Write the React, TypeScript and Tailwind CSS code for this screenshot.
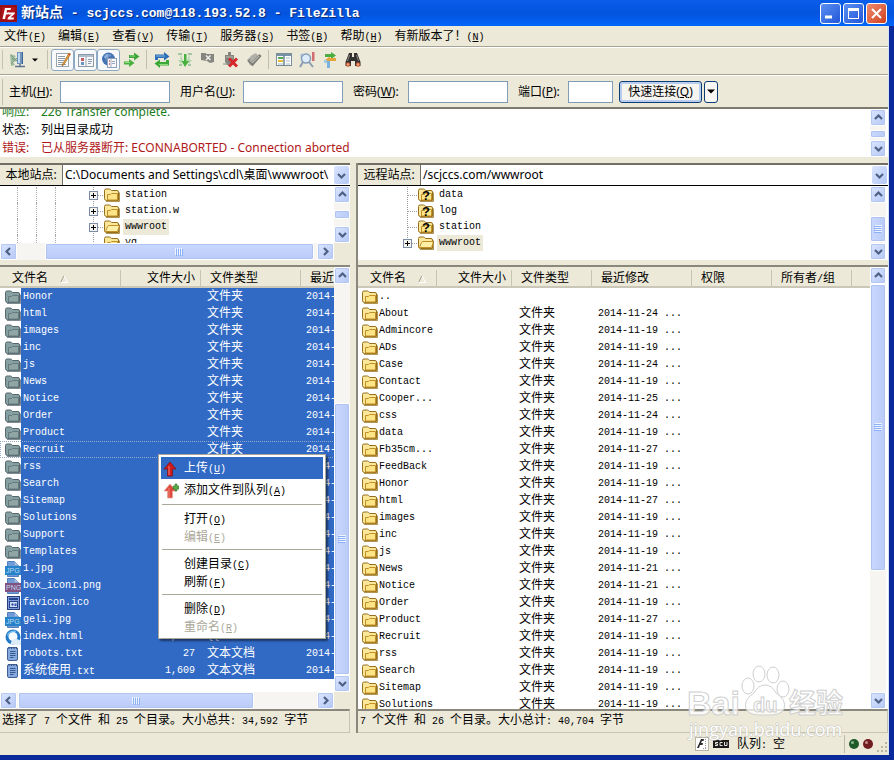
import React from "react";
import { clsx } from "clsx";

const SIM = "font-['Liberation_Mono','Noto_Sans_CJK_SC',monospace]";
const UI = "font-['Noto_Sans','Noto_Sans_CJK_SC',sans-serif]";

// Latin runs are half the width of a CJK character, so the CJK runs get their own size
function Sim({ text, zh = "text-[12px]" }: { text: string; zh?: string }) {
  const parts = text.split(/([\u3000-\u9fff\uff00-\uffef]+)/);
  return (
    <>
      {parts.map((p, i) =>
        i % 2 ? (
          <span key={i} className={clsx("leading-none", zh)}>{p}</span>
        ) : (
          p
        )
      )}
    </>
  );
}

function Mnemonic({ text, k }: { text: string; k: string }) {
  return (
    <span className="whitespace-nowrap">
      <Sim text={text} />(<u className="underline-offset-1">{k}</u>)
    </span>
  );
}

/* ---------- icons ---------- */

type FolderKind = "normal" | "open" | "ghost" | "unknown";

function FolderIcon({ kind = "normal" }: { kind?: FolderKind }) {
  const ghost = kind === "ghost";
  const line = ghost ? "#56666c" : "#94701c";
  const back = ghost ? "#87a0a2" : "#fbe79a";
  const front = ghost ? "#8fa6a4" : "#fde486";
  const inner = ghost ? "#647a7e" : "#c08f28";
  return (
    <svg width="16" height="16" viewBox="0 0 16 16" className="shrink-0">
      <path d="M.5 11.500V3.500Q.5 2 2 2H5.500Q6.500 2 7.500 3.500H13Q14.500 3.500 14.500 5V13.500H2.500Q.5 13.500.5 11.500Z" fill={back} stroke={line} />
      {kind === "open" ? (
        <path d="M1.500 12.500 3.500 7.500Q4 6.500 5 6.500H15.500L13.500 12.500Z" fill="#fff0a8" stroke={inner} />
      ) : (
        <path d="M3.500 13V7.500H6.500L7.500 6.500H13.500V13Z" fill={front} stroke={inner} />
      )}
      <path d="M2 14.500H15.500V5.500" fill="none" stroke={line} opacity=".75" />
      {kind === "unknown" && (
        <text x="4" y="13" className="fill-black font-['Liberation_Sans',sans-serif] text-[13px] font-bold">?</text>
      )}
    </svg>
  );
}

function ImageFileIcon({ tag }: { tag: string }) {
  const png = tag === "PNG";
  return (
    <svg width="16" height="16" viewBox="0 0 16 16" className="shrink-0">
      <path d="M2.500.5H9.500L13.500 4.500V15.500H2.500Z" fill="#6f9bd8" stroke="#5580bb" />
      <path d="M9.500.5V4.500H13.500" fill="#a9c4ea" stroke="#7ea1d3" />
      <rect x="0" y="5" width="16" height="9" fill={png ? "#81527f" : "#2683c9"} />
      <text x="1" y="12" className="fill-[#bcd8f2] font-['Liberation_Sans',sans-serif] text-[7px]">{tag}</text>
    </svg>
  );
}

function FileIcon({ type }: { type: string }) {
  if (type === "jpg") return <ImageFileIcon tag="JPG" />;
  if (type === "png") return <ImageFileIcon tag="PNG" />;
  if (type === "ico")
    return (
      <svg width="16" height="16" viewBox="0 0 16 16" className="shrink-0">
        <rect x="2.500" y="1.500" width="12" height="13" fill="#7d9ddb" stroke="#2a3f7a" />
        <rect x="4" y="3" width="9" height="2" fill="#27458f" />
        <rect x="4.500" y="6.500" width="8" height="6" fill="#d2def6" stroke="#27458f" />
        <path d="M6 9.500 7.500 8 9 9.500 7.500 11ZM9.500 8.500H11.500V11H9.500Z" fill="#3356a8" />
      </svg>
    );
  if (type === "html")
    return (
      <svg width="16" height="16" viewBox="0 0 16 16" className="shrink-0">
        <circle cx="8" cy="8" r="7.500" fill="#2279c8" />
        <circle cx="8" cy="7.500" r="4.500" fill="#f4faff" />
        <path d="M5.500 15.500Q6 10.500 10 10Q14 9.500 16 13V16Z" fill="#dcebf9" />
        <path d="M2.500 6.500Q5 1.500 11 2.500" fill="none" stroke="#75bff0" strokeWidth="1.500" />
      </svg>
    );
  if (type === "txt")
    return (
      <svg width="16" height="16" viewBox="0 0 16 16" className="shrink-0">
        <rect x="2.500" y="1.500" width="10" height="13" rx="1.500" fill="#86aadf" stroke="#425f92" />
        <path d="M4 1V3M6.500 1V3M9 1V3M11.500 1V3" stroke="#34507f" />
        <path d="M5 5.500H10.500M5 7.500H10.500M5 9.500H10.500M5 11.500H8.500" stroke="#38598f" />
      </svg>
    );
  return <FolderIcon kind="ghost" />;
}

function ToolIcon({ name }: { name: string }) {
  const art: Record<string, React.ReactNode> = {
    sites: (
      <>
        <path d="M0 2 6 4 4 6 7 9 3 10 5 13 1 14Z" fill="#9dbb9c" />
        <path d="M1 3 8 10M1 12 7 6M2 7H7" stroke="#7c9f86" />
        <rect x="7" y="0" width="6" height="12" fill="#6f94bd" />
        <path d="M8 1H10V11H8Z" fill="#c2d8ec" />
        <path d="M12.500 0V12" stroke="#3e6591" />
        <path d="M5 14.500H15M10 12V15" stroke="#5b738c" strokeWidth="1.500" />
      </>
    ),
    log: (
      <>
        <rect x="1.500" y="1.500" width="12" height="13" fill="#fff" stroke="#9aa5ae" />
        <path d="M3 4.500H10M3 6.500H10M3 8.500H9M3 10.500H8M3 12.500H11" stroke="#8d9aa8" />
        <path d="M14 1 8 11.500 7 14 9 12.500 15.500 2Z" fill="#efab35" stroke="#9d5f18" strokeWidth=".7" />
        <path d="M13.500 2 15 3" stroke="#d84a33" strokeWidth="1.500" />
      </>
    ),
    tree: (
      <>
        <rect x=".5" y="2.500" width="15" height="12" fill="#f6f8fa" stroke="#8c9aa8" />
        <path d="M1 4H15" stroke="#afbdcc" strokeWidth="2" />
        <path d="M8 5V14" stroke="#9aa5b1" />
        <rect x="3" y="6" width="3" height="3" fill="#c35d63" />
        <rect x="3" y="10" width="3" height="3" fill="#6c93c2" />
        <path d="M10 7.500H14M10 9.500H14M10 11.500H13" stroke="#8d9bb1" />
      </>
    ),
    remote: (
      <>
        <circle cx="7.500" cy="7" r="6.500" fill="#4673b4" />
        <path d="M3 5Q5 1 9 2L10 4 6 6 5 9Z" fill="#8bb0dd" />
        <path d="M2 7H14M8 1V13" stroke="#2d5592" strokeWidth=".6" />
        <rect x="6.500" y="6.500" width="9" height="9" fill="#f7f9fc" stroke="#8fa0b6" />
        <path d="M10 7V15" stroke="#a3afc0" />
        <path d="M8 9H9M8 12H9" stroke="#c6565a" strokeWidth="1.500" />
        <path d="M11 9.500H14M11 11.500H14" stroke="#9aa7bb" />
      </>
    ),
    queue: (
      <>
        <path d="M5 3H10V.5L15.500 4.500 10 8.500V6H5Z" fill="#3da53b" />
        <path d="M0 9.500H5V7L10.500 11 5 15V12.500H0Z" fill="#47b13f" />
        <path d="M6 4H11" stroke="#8fdc7b" />
        <path d="M1 10.500H6" stroke="#8fdc7b" />
      </>
    ),
    refresh: (
      <>
        <path d="M1 8V2.500H10V0L15.500 4.500 10 8.500V6H4V8Z" fill="#2d6fb6" />
        <path d="M15 8V13.500H6V16L.5 11.500 6 7.500V10H12V8Z" fill="#3ba939" />
        <path d="M2 4H11" stroke="#82b7e8" />
        <path d="M5 12.500H14" stroke="#8bdc76" />
      </>
    ),
    process: (
      <>
        <path d="M3.500 1V8H1L4 12 6 9M12.500 1V8H15L12 12 10 9" fill="#b4d8ad" />
        <path d="M1 2H5M11 2H15M2 13H5M11 13H14" stroke="#a5c3a5" strokeWidth="2" />
        <path d="M7 2H9.500V9H12L8 15 4.500 9H7Z" fill="#47b13f" />
      </>
    ),
    cancel: (
      <>
        <path d="M1 1H5L7 2H14V10L10 11 7 9 1 8Z" fill="#85867f" />
        <path d="M6 3.500 10.500 8M10.500 3.500 6 8" stroke="#f0f0ea" strokeWidth="1.500" />
      </>
    ),
    disconnect: (
      <>
        <path d="M2 3H5V0H8V3H11V10L8 13H4L2 10Z" fill="#85857f" />
        <path d="M3 5H10M0 12H4" stroke="#aaa9a0" strokeWidth="1.500" />
        <path d="M6 6.500 14 14.500M14 6.500 6 14.500" stroke="#d5272b" strokeWidth="3" />
      </>
    ),
    reconnect: (
      <>
        <path d="M1 8 6 3 10 1 13 5 7 14 4 13Z" fill="#b0b0a8" />
        <path d="M2.500 8 6.500 12 14.500 3" fill="none" stroke="#7e7e78" strokeWidth="3" />
        <path d="M3.500 8 6.500 11 13 4" fill="none" stroke="#c8c8c0" />
      </>
    ),
    compare: (
      <>
        <rect x=".5" y="1.500" width="15" height="12" fill="#fff" stroke="#7c8d9a" />
        <path d="M1 3H15" stroke="#7793a8" strokeWidth="2" />
        <path d="M2 6H7" stroke="#53a852" strokeWidth="2" />
        <path d="M2 9H7" stroke="#e6b931" strokeWidth="2" />
        <path d="M2 12H7M10 6H14M10 9H14M10 12H14" stroke="#a3bfc9" />
        <path d="M8 3V14" stroke="#6a828f" strokeWidth="1.500" />
      </>
    ),
    find: (
      <>
        <path d="M1 3 3 1 5 3V6H2Z" fill="#b5c8dd" />
        <circle cx="7" cy="6.500" r="4.500" fill="#dcecf9" stroke="#839bb9" strokeWidth="1.500" />
        <path d="M4 10 1 15M10 10 14 15" stroke="#8b9bb0" strokeWidth="2" />
        <path d="M13 0H15.500V9H13Z" fill="#d26c70" />
      </>
    ),
    sync: (
      <>
        <path d="M3 2H9V0L14 3.500 9 7V5H3Z" fill="#4cae41" />
        <path d="M14 6H8V4.500L3 8 8 11V9H14Z" fill="#e4a33b" />
        <path d="M5 9H8V16H5Z" fill="#7ab3df" />
        <path d="M2 8H5V11H2Z" fill="#a4cbe6" />
      </>
    ),
    binoculars: (
      <>
        <path d="M4 1H7V5H9V1H12L15.500 10V14H10V9H6V14H.5V10Z" fill="#33312f" />
        <path d="M4.500 3 2.500 9M11.500 3 13.500 9" stroke="#8b8681" />
        <circle cx="3" cy="12.500" r="2.300" fill="#b9532f" />
        <circle cx="13" cy="12.500" r="2.300" fill="#b9532f" />
        <circle cx="3" cy="12.500" r="1.200" fill="#f5a077" />
        <circle cx="13" cy="12.500" r="1.200" fill="#f5a077" />
      </>
    ),
  };
  return (
    <svg width="16" height="16" viewBox="0 0 16 16" className="shrink-0">
      {art[name]}
    </svg>
  );
}

function UploadIcon({ plus = false }: { plus?: boolean }) {
  return (
    <svg width="16" height="16" viewBox="0 0 16 16" className="shrink-0">
      <path d="M7 1 13 8H9.500V15H4.500V8H1Z" fill={plus ? "#dc4a3c" : "#cf1a1f"} stroke={plus ? "#e8a49c" : "#7d1318"} strokeWidth=".8" />
      <path d="M6 5V14" stroke="#f08377" />
      {plus && <path d="M10 3H12V1H14V3H16V6H14V8H12V6H10Z" fill="#58aa48" stroke="#38752e" strokeWidth=".6" />}
    </svg>
  );
}

/* ---------- scroll bars ---------- */

const arrows: Record<string, string> = {
  up: "M1 6 4.500 2.500 8 6",
  down: "M1 3 4.500 6.500 8 3",
  left: "M6 1 2.500 4.500 6 8",
  right: "M3 1 6.500 4.500 3 8",
};

function ArrowButton({ dir, className = "size-4" }: { dir: string; className?: string }) {
  return (
    <button
      aria-label={dir}
      className={clsx("flex shrink-0 items-center justify-center rounded-[2px] border border-white bg-linear-to-br from-[#dbe5ff] to-[#b5c8f5] shadow-[inset_0_0_0_1px_#b4c8f2]", className)}
    >
      <svg width="9" height="9" viewBox="0 0 9 9">
        <path d={arrows[dir]} fill="none" stroke="#4d6185" strokeWidth="2.200" />
      </svg>
    </button>
  );
}

interface ScrollBarProps {
  horizontal?: boolean;
  before: number;
  size: number;
  after: number;
  grip?: boolean;
}

function ScrollBar({ horizontal, before, size, after, grip = true }: ScrollBarProps) {
  return (
    <div className={clsx("flex shrink-0 bg-[#f6f5f1]", horizontal ? "h-[17px] flex-row" : "w-4 flex-col")}>
      <ArrowButton dir={horizontal ? "left" : "up"} className={horizontal ? "h-[17px] w-[17px]" : "h-[17px] w-4"} />
      <div style={{ flexGrow: before }} className="basis-0" />
      <div
        style={{ flexGrow: size }}
        className={clsx(
          "flex basis-0 items-center justify-center rounded-[2px] border border-white shadow-[inset_0_0_0_1px_#b1c4f0]",
          horizontal ? "bg-linear-to-b from-[#c9d8ff] to-[#b9cbf7]" : "bg-linear-to-r from-[#c9d8ff] to-[#b9cbf7]"
        )}
      >
        {grip && (
          <svg width="8" height="8" viewBox="0 0 8 8" className={clsx(!horizontal && "rotate-90")}>
            <path d="M.5 0V7M2.500 0V7M4.500 0V7M6.500 0V7" stroke="#eef4fe" />
            <path d="M1.500 1V8M3.500 1V8M5.500 1V8M7.500 1V8" stroke="#8cb0f8" />
          </svg>
        )}
      </div>
      <div style={{ flexGrow: after }} className="basis-0" />
      <ArrowButton dir={horizontal ? "right" : "down"} className={horizontal ? "h-[17px] w-[17px]" : "h-[17px] w-4"} />
    </div>
  );
}

/* ---------- title, menu, tool bars ---------- */

function TitleBar() {
  const btn = "flex size-[21px] items-center justify-center rounded-[3px] border border-white";
  return (
    <header className="flex h-[26px] shrink-0 items-center gap-[3px] bg-linear-to-b from-[#0a5eea] via-[#0453dd] to-[#0266fb] pr-[7px]">
      <svg width="17" height="17" viewBox="0 0 17 17" className="shrink-0">
        <rect width="17" height="17" fill="#b3141a" />
        <rect x="1" y="1" width="15" height="15" fill="none" stroke="#7e0d12" />
        <path d="M5 3H11L10.500 5H7L6.500 7.500H9L8.500 9.500H6L5 14H2.500Z" fill="#fff" />
        <path d="M8 7.500H15L14.500 9 10.500 12.500H14L13.500 14.500H7.500L8 12.500 11.500 9.500H9Z" fill="#fff" />
      </svg>
      <h1 className={clsx(SIM, "flex-1 truncate pt-0.5 pl-px text-[13px] font-bold text-white [text-shadow:1px_1px_1px_#0a2a78]")}>
        <Sim text="新站点 - scjccs.com@118.193.52.8 - FileZilla" zh="text-[14px]" />
      </h1>
      <div className="flex gap-0.5">
        <button aria-label="最小化" className={clsx(btn, "bg-linear-to-br from-[#5c8ff2] to-[#2355d8]")}>
          <svg width="13" height="13" viewBox="0 0 13 13"><path d="M1 10H8" stroke="#fff" strokeWidth="3" /></svg>
        </button>
        <button aria-label="最大化" className={clsx(btn, "bg-linear-to-br from-[#5c8ff2] to-[#2355d8]")}>
          <svg width="13" height="13" viewBox="0 0 13 13">
            <rect x="1.500" y="1.500" width="10" height="10" fill="none" stroke="#fff" />
            <path d="M1 2.500H12" stroke="#fff" strokeWidth="3" />
          </svg>
        </button>
        <button aria-label="关闭" className={clsx(btn, "bg-linear-to-br from-[#ee8a6c] to-[#cf3f1b]")}>
          <svg width="13" height="13" viewBox="0 0 13 13"><path d="M2 2 11 11M11 2 2 11" stroke="#fff" strokeWidth="2" /></svg>
        </button>
      </div>
    </header>
  );
}

const menus = [
  ["文件", "F"],
  ["编辑", "E"],
  ["查看", "V"],
  ["传输", "T"],
  ["服务器", "S"],
  ["书签", "B"],
  ["帮助", "H"],
  ["有新版本了！", "N"],
];

function MenuBar() {
  return (
    <nav className={clsx(SIM, "flex h-[21px] shrink-0 items-center gap-3 border-b border-[#a5a292] pt-0.5 pl-1 text-[10px]")}>
      {menus.map(([text, k]) => (
        <button key={k} className="leading-none">
          <Mnemonic text={text} k={k} />
        </button>
      ))}
    </nav>
  );
}

const toolGroups = [
  ["log", "tree", "remote", "queue"],
  ["refresh", "process", "cancel", "disconnect", "reconnect"],
  ["compare", "find", "sync", "binoculars"],
];

function ToolBar() {
  return (
    <div className="flex h-7 shrink-0 items-center border-t border-b border-t-white border-b-[#a5a292] pb-[3px] pl-0.5">
      <div className="h-[19px] w-px bg-[#c6c3b2]" />
      <button aria-label="sites" className="flex h-[23px] w-[41px] items-center gap-1.5 pl-[7px]">
        <ToolIcon name="sites" />
        <svg width="6" height="4" viewBox="0 0 6 4"><path d="M0 .5H6L3 3.500Z" fill="#000" /></svg>
      </button>
      {toolGroups.map((group) => (
        <div key={group[0]} className="flex items-center">
          <div className="mx-[3px] h-[19px] w-px bg-[#c2bfae]" />
          {group.map((name) => (
            <button
              key={name}
              aria-label={name}
              className={clsx(
                "flex h-[22px] w-[23px] items-center justify-center rounded-[3px]",
                ["log", "tree", "remote"].includes(name) && "border border-[#8ea9c3] bg-[#f8f9fb]"
              )}
            >
              <ToolIcon name={name} />
            </button>
          ))}
        </div>
      ))}
    </div>
  );
}

const fields = [
  { id: "host", text: "主机", k: "H", label: "w-[51px]", input: "w-[110px]", type: "text" },
  { id: "user", text: "用户名", k: "U", label: "w-[63px]", input: "w-[100px]", type: "text" },
  { id: "pass", text: "密码", k: "W", label: "w-[55px]", input: "w-[100px]", type: "password" },
  { id: "port", text: "端口", k: "P", label: "w-[50px]", input: "w-[45px]", type: "text" },
];

function QuickConnect() {
  return (
    <form className={clsx(UI, "flex h-[34px] shrink-0 items-center border-t border-b-2 border-t-white border-b-[#7d7b6f] pl-0.5 text-[12px]")}>
      <div className="mr-1.5 h-[26px] w-px bg-[#c2bfae]" />
      <div className="flex items-center gap-[10px]">
        {fields.map((f) => (
          <div key={f.id} className="flex items-center">
            <label htmlFor={f.id} className={clsx("whitespace-nowrap", f.label)}>
              {f.text}(<u>{f.k}</u>):
            </label>
            <input id={f.id} type={f.type} className={clsx("h-[22px] border border-[#7f9db9] bg-white px-1", f.input)} />
          </div>
        ))}
      </div>
      <button type="button" className="ml-1.5 h-[22px] w-[83px] rounded-[3px] border border-[#0c3c74] bg-[#f5f4ef] leading-5 whitespace-nowrap shadow-[inset_0_0_0_2px_#b9cdf0]">
        快速连接(<u>Q</u>)
      </button>
      <button type="button" aria-label="历史" className="ml-0.5 flex h-[22px] w-[14px] items-center justify-center rounded-[3px] border border-[#0c3c74] bg-[#f7f6f2]">
        <svg width="8" height="5" viewBox="0 0 8 5"><path d="M0 .5H8L4 4.500Z" fill="#000" /></svg>
      </button>
    </form>
  );
}

const logLines = [
  { kind: "响应:", msg: "226 Transfer complete.", color: "text-[#1c7c1c]" },
  { kind: "状态:", msg: "列出目录成功", color: "text-black" },
  { kind: "错误:", msg: "已从服务器断开: ECONNABORTED - Connection aborted", color: "text-[#b01818]" },
];

function MessageLog() {
  return (
    <section className="flex h-12 shrink-0 bg-white">
      <div className={clsx(UI, "flex flex-1 flex-col justify-end overflow-hidden pl-0.5 text-[12px] leading-[18px]")}>
        {logLines.map((l) => (
          <p key={l.kind} className={clsx("flex h-[18px] shrink-0", l.color)}>
            <span className="w-[39px]">{l.kind}</span>
            <span>{l.msg}</span>
          </p>
        ))}
      </div>
      <div className="flex pr-0.5">
        <ScrollBar before={5} size={7} after={2} grip={false} />
      </div>
    </section>
  );
}

/* ---------- site trees ---------- */

function SiteSelect({ id, label, value }: { id: string; label: string; value: string }) {
  return (
    <div className={clsx(UI, "flex h-[23px] shrink-0 border-t-2 border-b border-t-[#716f64] border-b-black text-[12px]")}>
      <label htmlFor={id} className="flex w-[63px] shrink-0 items-center justify-center border-r border-[#716f64] bg-[#ece9d8] whitespace-nowrap">
        {label}
      </label>
      <div className="relative min-w-0 flex-1 bg-white">
        <select id={id} className="size-full appearance-none bg-white pl-0.5 leading-[20px]">
          <option>{value}</option>
        </select>
        <div className="pointer-events-none absolute inset-y-px right-px flex w-[15px] items-center justify-center rounded-[2px] bg-linear-to-br from-[#dbe5ff] to-[#b5c8f5]">
          <svg width="9" height="9" viewBox="0 0 9 9">
            <path d={arrows.down} fill="none" stroke="#4d6185" strokeWidth="2.200" />
          </svg>
        </div>
      </div>
    </div>
  );
}

interface TreeNode {
  name: string;
  kind: FolderKind;
  expandable?: boolean;
  selected?: boolean;
  last?: boolean;
}

function Connector({ node }: { node: TreeNode }) {
  return (
    <svg width="15" height="16" viewBox="0 0 15 16" className="shrink-0">
      <path d={node.last ? "M4.500 0V8" : "M4.500 0V16"} stroke="#9a9a9a" strokeDasharray="1 1" />
      <path d="M5 8.500H15" stroke="#9a9a9a" strokeDasharray="1 1" />
      {node.expandable && (
        <>
          <rect x=".5" y="4.500" width="8" height="8" fill="#f4f3ee" stroke="#7b8ea5" />
          <path d="M2 8.500H7M4.500 6V11" stroke="#000" />
        </>
      )}
    </svg>
  );
}

function Tree({ nodes, guides, indent }: { nodes: TreeNode[]; guides?: boolean; indent: string }) {
  return (
    <ul className={clsx(SIM, "min-w-0 flex-1 overflow-hidden pt-px text-[10px]")}>
      {nodes.map((n) => (
        <li key={n.name} className="flex h-4 items-center">
          <div className={clsx("flex h-4 shrink-0", indent)}>
            {guides && (
              <>
                <div className="w-[18px] border-r border-dotted border-[#a9a9a9]" />
                <div className="w-[19px] border-r border-dotted border-[#a9a9a9]" />
                <div className="w-[19px] border-r border-dotted border-[#a9a9a9]" />
              </>
            )}
          </div>
          <Connector node={n} />
          <FolderIcon kind={n.kind} />
          <span className={clsx("ml-[3px] px-0.5 leading-4", n.selected && "bg-[#ece9d8]")}>{n.name}</span>
        </li>
      ))}
    </ul>
  );
}

const localNodes: TreeNode[] = [
  { name: "station", kind: "normal", expandable: true },
  { name: "station.w", kind: "normal", expandable: true },
  { name: "wwwroot", kind: "open", expandable: true, selected: true },
  { name: "yg", kind: "normal" },
];

const remoteNodes: TreeNode[] = [
  { name: "data", kind: "unknown" },
  { name: "log", kind: "unknown" },
  { name: "station", kind: "unknown" },
  { name: "wwwroot", kind: "open", expandable: true, selected: true, last: true },
];

/* ---------- file lists ---------- */

interface Column {
  title: string;
  width: string;
  align?: string;
  sorted?: boolean;
}

function HeaderRow({ columns }: { columns: Column[] }) {
  return (
    <thead>
      <tr className="h-5">
        {columns.map((c, i) => (
          <th key={i} className={clsx("border-b-2 border-[#cbc7b8] bg-[#ece9d8] p-0 pt-0.5 font-normal", c.width)}>
            <div className={clsx("flex h-4 items-center overflow-hidden pt-0.5 whitespace-nowrap", c.align ?? "pl-[9px]", c.title && "border-r border-[#c7c5b2]")}>
              <span><Sim text={c.title} /></span>
              {c.sorted && (
                <svg width="8" height="8" viewBox="0 0 8 8" className="ml-3">
                  <path d="M.5 7.500 4 .5" stroke="#a5a292" />
                  <path d="M4 .5 7.500 7.500H.5" fill="none" stroke="#fff" />
                </svg>
              )}
            </div>
          </th>
        ))}
      </tr>
    </thead>
  );
}

const localColumns: Column[] = [
  { title: "文件名", width: "w-[121px]", align: "pl-3", sorted: true },
  { title: "文件大小", width: "w-[80px]", align: "justify-end pr-[5px]" },
  { title: "文件类型", width: "w-[100px]" },
  { title: "最近修改", width: "w-[100px]" },
];

const remoteColumns: Column[] = [
  { title: "文件名", width: "w-[79px]", align: "pl-3", sorted: true },
  { title: "文件大小", width: "w-[75px]", align: "justify-end pr-[5px]" },
  { title: "文件类型", width: "w-[80px]" },
  { title: "最近修改", width: "w-[100px]" },
  { title: "权限", width: "w-[80px]" },
  { title: "所有者/组", width: "w-[80px]" },
  { title: "", width: "w-auto" },
];

const localDirs = [
  "Honor", "html", "images", "inc", "js", "News", "Notice", "Order", "Product", "Recruit",
  "rss", "Search", "Sitemap", "Solutions", "Support", "Templates",
];

const localFiles = [
  ...localDirs.map((name) => ({ name, icon: "dir", size: "", type: "文件夹" })),
  { name: "1.jpg", icon: "jpg", size: "4,216", type: "JPG 图像" },
  { name: "box_icon1.png", icon: "png", size: "3,012", type: "PNG 图像" },
  { name: "favicon.ico", icon: "ico", size: "1,150", type: "图标" },
  { name: "geli.jpg", icon: "jpg", size: "9,516", type: "JPG 图像" },
  { name: "index.html", icon: "html", size: "15,062", type: "QQBrowser HTML" },
  { name: "robots.txt", icon: "txt", size: "27", type: "文本文档" },
  { name: "系统使用.txt", icon: "txt", size: "1,609", type: "文本文档" },
];

const remoteFiles: [string, string][] = [
  ["..", ""],
  ["About", "24"],
  ["Admincore", "19"],
  ["ADs", "19"],
  ["Case", "24"],
  ["Contact", "19"],
  ["Cooper...", "25"],
  ["css", "24"],
  ["data", "19"],
  ["Fb35cm...", "27"],
  ["FeedBack", "19"],
  ["Honor", "19"],
  ["html", "27"],
  ["images", "19"],
  ["inc", "19"],
  ["js", "19"],
  ["News", "21"],
  ["Notice", "21"],
  ["Order", "19"],
  ["Product", "27"],
  ["Recruit", "19"],
  ["rss", "19"],
  ["Search", "19"],
  ["Sitemap", "19"],
  ["Solutions", "19"],
];

function LocalList() {
  return (
    <table className={clsx(SIM, "w-[401px] table-fixed border-collapse text-[10px] leading-none whitespace-nowrap")}>
      <HeaderRow columns={localColumns} />
      <tbody className="text-white">
        {localFiles.map((f) => {
          const focus = f.name === "Recruit" && "outline-1 -outline-offset-1 outline-dotted outline-[#93a9cc]";
          const cell = "bg-[#316ac5] p-0";
          return (
            <tr key={f.name} className={clsx("h-[17px]", focus)}>
              <td className="p-0">
                <div className="flex h-[17px] items-center bg-white pl-[5px]">
                  <FileIcon type={f.icon} />
                  <span className={clsx(cell, "flex h-[17px] flex-1 items-center pl-0.5")}>
                    <span><Sim text={f.name} /></span>
                  </span>
                </div>
              </td>
              <td className={clsx(cell, "pr-1.5 text-right")}>{f.size}</td>
              <td className={clsx(cell, "pl-1.5")}><Sim text={f.type} /></td>
              <td className={clsx(cell, "pl-[5px]")}>2014-11-27 ...</td>
            </tr>
          );
        })}
      </tbody>
    </table>
  );
}

function RemoteList() {
  return (
    <table className={clsx(SIM, "w-full table-fixed border-collapse text-[10px] leading-none whitespace-nowrap")}>
      <HeaderRow columns={remoteColumns} />
      <tbody>
        {remoteFiles.map(([name, day]) => (
          <tr key={name} className="h-[17px]">
            <td className="p-0">
              <div className="flex h-[17px] items-center gap-px pl-1">
                <FolderIcon />
                {name}
              </div>
            </td>
            <td className="p-0" />
            <td className="p-0 pl-[7px]"><Sim text={day && "文件夹"} /></td>
            <td className="p-0 pl-1.5">{day && `2014-11-${day} ...`}</td>
            <td className="p-0" />
            <td className="p-0" />
            <td className="p-0" />
          </tr>
        ))}
      </tbody>
    </table>
  );
}

const menuGroups = [
  [
    { text: "打开", k: "O" },
    { text: "编辑", k: "E", disabled: true },
  ],
  [
    { text: "创建目录", k: "C" },
    { text: "刷新", k: "F" },
  ],
  [
    { text: "删除", k: "D" },
    { text: "重命名", k: "R", disabled: true },
  ],
];

function ContextMenu() {
  return (
    <div
      role="menu"
      className={clsx(SIM, "absolute top-[187px] left-[158px] z-10 w-[168px] border border-[#aca899] bg-white p-0.5 text-[10px] leading-none shadow-[2px_2px_2px_rgba(0,0,0,0.5)]")}
    >
      <button role="menuitem" className="flex h-[22px] w-full items-center gap-[5px] bg-[#316ac5] pt-px pl-0.5 text-white">
        <UploadIcon />
        <Mnemonic text="上传" k="U" />
      </button>
      <button role="menuitem" className="flex h-[22px] w-full items-center gap-[5px] pt-px pl-0.5">
        <UploadIcon plus />
        <Mnemonic text="添加文件到队列" k="A" />
      </button>
      {menuGroups.map((group, i) => (
        <div key={i}>
          <hr className="mx-px mt-[3px] mb-[5px] border-t border-[#aca899]" />
          {group.map((item) => (
            <button
              key={item.k}
              role="menuitem"
              disabled={item.disabled}
              className="flex h-[18px] w-full items-center pt-px pl-[23px] disabled:text-[#aca899]"
            >
              <Mnemonic text={item.text} k={item.k} />
            </button>
          ))}
        </div>
      ))}
    </div>
  );
}

function PaneStatus({ text }: { text: string }) {
  return (
    <p className={clsx(SIM, "flex h-6 shrink-0 items-center overflow-hidden border-t-2 border-r border-b border-t-[#8a887c] border-r-[#c7c5b2] border-b-[#c7c5b2] bg-[#ece9d8] pl-0.5 text-[10px] whitespace-nowrap")}>
      <span><Sim text={text} /></span>
    </p>
  );
}

function LocalPane() {
  return (
    <section className="flex min-h-0 min-w-0 flex-col">
      <SiteSelect id="local-site" label="本地站点:" value={"C:\\Documents and Settings\\cdl\\桌面\\wwwroot\\"} />
      <div className="flex h-[74px] shrink-0 bg-white">
        <div className="flex min-w-0 flex-1 flex-col">
          <div className="flex min-h-0 flex-1 overflow-hidden">
            <Tree nodes={localNodes} guides indent="w-[89px]" />
          </div>
          <ScrollBar horizontal before={28} size={268} after={3} />
        </div>
        <div className="flex flex-col bg-[#ece9d8] pb-[17px]">
          <div className="flex flex-1">
            <ScrollBar before={8} size={7} after={8} grip={false} />
          </div>
        </div>
      </div>
      <div className="relative mt-[5px] flex min-h-0 flex-1 border-t-2 border-[#8a887c] bg-white">
        <div className="flex min-w-0 flex-1 flex-col">
          <div className="min-h-0 flex-1 overflow-hidden">
            <LocalList />
          </div>
          <ScrollBar horizontal before={1} size={235} after={63} />
        </div>
        <div className="flex bg-[#ece9d8] pb-[17px]">
          <ScrollBar before={120} size={271} after={0} />
        </div>
        <ContextMenu />
      </div>
      <PaneStatus text="选择了 7 个文件 和 25 个目录。大小总共: 34,592 字节" />
    </section>
  );
}

function RemotePane() {
  return (
    <section className="flex min-h-0 min-w-0 flex-col border-l-2 border-[#8a887c]">
      <SiteSelect id="remote-site" label="远程站点:" value="/scjccs.com/wwwroot" />
      <div className="flex h-[74px] shrink-0 bg-white pr-0.5">
        <Tree nodes={remoteNodes} indent="w-[45px]" />
        <ScrollBar before={14} size={25} after={1} />
      </div>
      <div className="mt-[5px] flex min-h-0 flex-1 border-t-2 border-[#8a887c] bg-white pr-0.5">
        <div className="min-w-0 flex-1 overflow-hidden">
          <RemoteList />
        </div>
        <ScrollBar before={0} size={286} after={122} />
      </div>
      <PaneStatus text="7 个文件 和 26 个目录。大小总计: 40,704 字节" />
    </section>
  );
}

function StatusBar() {
  return (
    <footer className={clsx(SIM, "flex h-[22px] shrink-0 items-center text-[10px]")}>
      <div className="ml-auto flex items-center">
        <svg width="14" height="14" viewBox="0 0 14 14" className="mr-1">
          <rect x=".5" y=".5" width="13" height="13" fill="#fff" stroke="#b7b5a8" />
          <path d="M2 11 6 2H9L8.500 4H7L6 6H8L7.500 8H5L4 11Z" fill="#2b2b2b" />
          <path d="M10.500 2V12M8 11.500H12" stroke="#999" strokeDasharray="1 1" />
        </svg>
        <svg width="16" height="8" viewBox="0 0 16 8" className="mr-2">
          <rect width="16" height="8" fill="#1c1c1c" />
          <path d="M5 2.500H2.500V4H4.500V5.500H2M9.500 2.500H7V5.500H9.500M11.500 2V5.500H14V2" fill="none" stroke="#e8e6da" />
        </svg>
        <span className="w-[107px] pt-0.5 whitespace-nowrap"><Sim text="队列: 空" /></span>
        <div className="flex h-[18px] items-center gap-0.5 border-l border-[#bdbaa8] pl-[3px]">
          <svg width="12" height="12" viewBox="0 0 12 12">
            <circle cx="6" cy="6" r="5" fill="#1d5a27" />
            <circle cx="4.500" cy="4.500" r="1.500" fill="#86b88a" />
          </svg>
          <svg width="12" height="12" viewBox="0 0 12 12">
            <circle cx="6" cy="6" r="5" fill="#701d22" />
            <circle cx="4.500" cy="4.500" r="1.500" fill="#c18a8c" />
          </svg>
          <svg width="12" height="12" viewBox="0 0 12 12" className="mt-1.5">
            <path d="M9 1H11V3H9ZM5 5H7V7H5ZM9 5H11V7H9ZM1 9H3V11H1ZM5 9H7V11H5ZM9 9H11V11H9Z" fill="#b8b5a2" />
          </svg>
        </div>
      </div>
    </footer>
  );
}

function Watermark() {
  return (
    <svg width="162" height="82" viewBox="0 0 162 82" className="pointer-events-none absolute right-[46px] bottom-[18px] z-20">
      <g fill="#ffffff" fillOpacity=".75" stroke="#cfcfcf" strokeWidth="1">
        <ellipse cx="62" cy="26" rx="6" ry="8" />
        <ellipse cx="73" cy="14" rx="6" ry="8" />
        <ellipse cx="87" cy="15" rx="6" ry="8" />
        <ellipse cx="97" cy="29" rx="6" ry="8" />
        <path d="M79 25Q86 25 90 33Q101 40 98 49Q95 56 79 55Q63 56 60 49Q57 40 68 33Q72 25 79 25Z" />
        <text x="1" y="55" className="font-['Liberation_Sans',sans-serif] text-[34px] font-bold">Bai</text>
        <text x="67" y="52" className="font-['Liberation_Sans',sans-serif] text-[20px] font-bold">du</text>
        <text x="103" y="53" className="font-['Noto_Sans_CJK_SC',sans-serif] text-[27px] font-bold">经验</text>
      </g>
      <text x="3" y="76" className="fill-white stroke-[#c4c4c0] stroke-1 font-['Open_Sans',sans-serif] text-[18px] [paint-order:stroke]">jingyan.baidu.com</text>
    </svg>
  );
}

export default function App() {
  return (
    <div className="relative flex h-screen min-h-[520px] flex-col overflow-hidden bg-[#0a2a9c] text-black">
      <TitleBar />
      <main className="mr-[5px] mb-[5px] flex min-h-0 flex-1 flex-col border-r border-[#d7e3f5] bg-[#ece9d8]">
        <MenuBar />
        <ToolBar />
        <QuickConnect />
        <MessageLog />
        <div className="grid min-h-0 flex-1 grid-cols-[350fr_532fr] grid-rows-[minmax(0,1fr)] gap-x-1.5 pt-1.5">
          <LocalPane />
          <RemotePane />
        </div>
        <StatusBar />
      </main>
      <Watermark />
    </div>
  );
}
